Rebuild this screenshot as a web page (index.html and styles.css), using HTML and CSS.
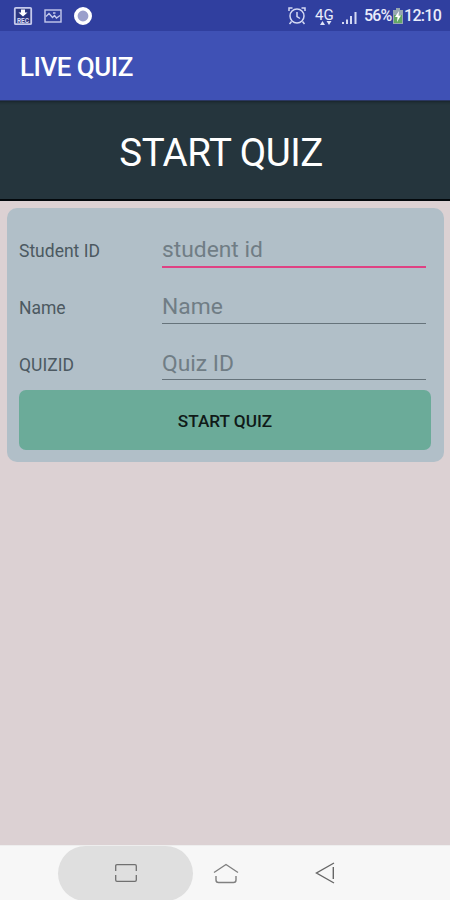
FILE: index.html
```html
<!DOCTYPE html>
<html lang="en">
<head>
<meta charset="utf-8">
<title>Live Quiz</title>
<link rel="stylesheet" href="styles.css">
</head>
<body>
<div class="screen">
  <div class="status">
    <svg width="20" height="20" viewBox="0 0 20 20">
      <rect x="1.800" y="1.800" width="16.400" height="16.400" rx="1" fill="#2b3680" stroke="#c5caed" stroke-width="1.800"/>
      <path d="M8 3.500h4v3h2.500L10 10.500 5.500 6.500H8z" fill="#fff"/>
      <text x="10" y="16.500" class="rec-text">REC</text>
    </svg>
    <svg class="pic" width="18" height="14" viewBox="0 0 18 14" fill="none" stroke="#c5caed" stroke-width="1.400">
      <rect x="1" y="1" width="16" height="12"/>
      <path d="M2 7.500l3-3 3.500 4 2-2 2 2.500 3.500-2.500M9 4h2.500"/>
    </svg>
    <svg class="dot" width="20" height="20" viewBox="0 0 20 20">
      <circle cx="10" cy="10" r="7.200" fill="#9a9fcb" stroke="#fff" stroke-width="3.600"/>
    </svg>
    <svg class="alarm" width="18" height="20" viewBox="0 0 18 20" fill="none" stroke="#d4d9f3" stroke-width="1.500">
      <circle cx="9" cy="10" r="7"/>
      <path d="M9 6v4.500l3 2M1 5V2h3.500M13.500 2H17v3M3.500 15.500L1.500 18M14.500 15.500l2 2.500"/>
    </svg>
    <span class="net">4G
      <svg class="arrows" width="12" height="5" viewBox="0 0 12 5" fill="#e0e4f8"><path d="M0 4L2.500 0 5 4zM6.500 0h5L9 4z"/></svg>
    </span>
    <svg class="signal" width="16" height="14" viewBox="0 0 16 14" fill="#d4d9f3">
      <path d="M0 12h2v2H0zM4 9.500h2V14H4zM8 6h2v8H8zM12.500 2h2v12h-2z"/>
    </svg>
    <span class="pct">56%</span>
    <svg width="10" height="16" viewBox="0 0 10 16">
      <path d="M3 0h4v2h3v14H0V2h3z" fill="#96a7b0"/>
      <path d="M1 7h8v8H1z" fill="#62a765"/>
      <path d="M6 3L2 9h2.500L4 14l4-6.500H5.500z" fill="#fff"/>
    </svg>
    <span class="clock">12:10</span>
  </div>
  <header class="appbar"><span class="app-title">LIVE QUIZ</span></header>
  <div class="banner"><h1>START QUIZ</h1></div>
  <main>
    <form class="card">
      <div class="row"><label>Student ID</label><div class="field active">student id</div></div>
      <div class="row"><label>Name</label><div class="field">Name</div></div>
      <div class="row last"><label>QUIZID</label><div class="field">Quiz ID</div></div>
      <button type="button">START QUIZ</button>
    </form>
  </main>
  <nav>
    <div class="pill">
      <svg width="22" height="18" viewBox="0 0 22 18" fill="none" stroke="#707070" stroke-width="1.300"><path d="M.7 7V2q0-1.300 1.300-1.300h18q1.300 0 1.300 1.300v5M.7 11v5q0 1.300 1.300 1.300h18q1.300 0 1.300-1.300v-5"/></svg>
    </div>
    <svg class="home" width="26" height="21" viewBox="0 0 26 21" fill="none" stroke="#808080" stroke-width="1.400"><path d="M1 9.500L13 1.500l12 8M3 13v4q0 2.500 2.500 2.500h15q2.500 0 2.500-2.500v-4"/></svg>
    <svg class="back" width="20" height="22" viewBox="0 0 20 22" fill="none" stroke="#666" stroke-width="1.400"><path d="M19 1L1.500 11 19 21M18.300 5v12"/></svg>
  </nav>
</div>
</body>
</html>
```
FILE: styles.css
```css
* { box-sizing: border-box; }
body { margin: 0; font-family: Roboto, sans-serif; }
.screen { width: 450px; height: 900px; display: flex; flex-direction: column; background: #dcd1d3; overflow: hidden; }
svg { display: block; flex: none; }
.status { height: 31px; flex: none; display: flex; align-items: center; background: #303f9f; color: #e9ecfb; padding-left: 13px; white-space: nowrap; }
.rec-text { font: bold 6.5px Roboto, sans-serif; text-anchor: middle; fill: #d8dcf5; }
.pic { margin-left: 11px; }
.dot { margin-left: 11px; }
.alarm { margin-left: 195px; }
.net { position: relative; width: 21px; margin-left: 9px; margin-top: -2px; font-size: 15px; line-height: 18px; }
.arrows { position: absolute; left: 5px; top: 15px; }
.signal { margin-left: 6px; margin-top: 3px; }
.pct { width: 29px; margin-left: 6px; font-size: 16px; font-weight: 500; letter-spacing: -.9px; }
.clock { margin-left: 1px; font-size: 16px; font-weight: 500; letter-spacing: -.7px; }
.appbar { height: 69px; flex: none; display: flex; align-items: center; padding: 3px 0 0 20px; background: #3f51b5; color: #fff; }
.app-title { font-size: 26px; font-weight: 500; letter-spacing: -.5px; }
.banner { height: 101px; flex: none; display: flex; align-items: center; justify-content: center; padding-top: 6px; background: #25353d; border-top: 1px solid #2a3660; border-bottom: 2px solid #03080c; box-shadow: inset 0 4px 3px -3px #17232a; }
.banner h1 { margin: 0 0 0 -8px; color: #fff; font-size: 38.5px; font-weight: 400; line-height: 46px; letter-spacing: -.5px; white-space: nowrap; }
main { flex: 1; padding: 7px 6px 0 7px; }
.card { height: 254px; padding: 12px; border-radius: 10px; background: #b1bfc8; }
.row { height: 57px; display: flex; }
.row label { width: 143px; padding-top: 20px; font-size: 17.5px; line-height: 22px; color: #4c5961; white-space: nowrap; }
.field { width: 264px; height: 47px; padding-top: 14px; border-bottom: 1px solid #66737b; font-size: 22.8px; line-height: 31px; color: #707d85; white-space: nowrap; }
.field.active { height: 48px; border-bottom: 2px solid #df4183; }
.row.last { height: 56px; }
.row.last .field { height: 46px; }
.card button { display: block; width: 412px; height: 60px; margin: 0; padding: 2px 0 0; border: 0; border-radius: 7px; background: #6bab99; color: #101a18; font: 500 17.2px/20px Roboto, sans-serif; }
nav { height: 55px; flex: none; display: flex; align-items: center; background: #f7f7f7; border-top: 1px solid #eee; }
.pill { width: 135px; height: 55px; margin-left: 58px; border-radius: 28px; background: #dfdfdf; display: flex; align-items: center; justify-content: center; }
.home { margin-left: 20px; }
.back { margin-left: 76px; }
```
